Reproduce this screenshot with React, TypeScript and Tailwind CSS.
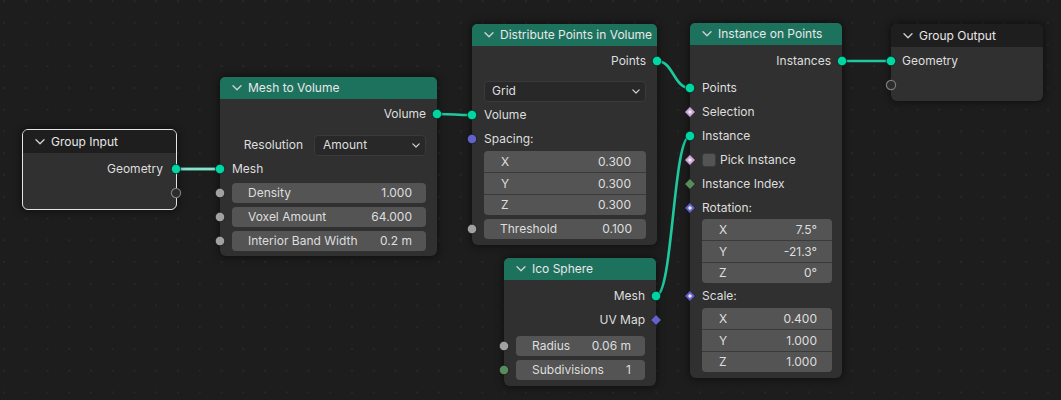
import React from 'react';

const C = { geo: '#00d6a3', gray: '#a1a1a1', vec: '#6363c7', int: '#598c5c', bool: '#cca6d6' };

type Kind = 'geo' | 'gray' | 'vec' | 'int' | 'hollow' | 'boolDot' | 'intDia' | 'vecDot' | 'vecDia';

function SocketIcon({ kind }: { kind: Kind }) {
  if (kind === 'hollow') {
    return (
      <svg width="12" height="12" viewBox="0 0 12 12">
        <circle cx="6" cy="6" r="4.6" fill="#2c2c2c" stroke="#7c7c7c" strokeWidth="1.2" />
      </svg>
    );
  }
  const circ: Record<string, string> = { geo: C.geo, gray: C.gray, vec: C.vec, int: C.int };
  if (circ[kind]) {
    return (
      <svg width="12" height="12" viewBox="0 0 12 12">
        <circle cx="6" cy="6" r="4.7" fill={circ[kind]} stroke="rgba(0,0,0,0.55)" strokeWidth="1" />
      </svg>
    );
  }
  const dia: Record<string, [string, boolean]> = {
    boolDot: [C.bool, true],
    intDia: [C.int, false],
    vecDot: [C.vec, true],
    vecDia: [C.vec, false],
  };
  const [col, dot] = dia[kind];
  return (
    <svg width="12" height="12" viewBox="0 0 12 12">
      <polygon points="6,0.6 11.4,6 6,11.4 0.6,6" fill={col} stroke="rgba(0,0,0,0.55)" strokeWidth="1" />
      {dot && <circle cx="6" cy="6" r="1.7" fill="#eeeaf2" />}
    </svg>
  );
}

function Sock({ kind, side }: { kind: Kind; side: 'l' | 'r' }) {
  return (
    <span
      className={
        side === 'l'
          ? 'absolute -left-[6px] top-1/2 -translate-y-1/2 flex'
          : 'absolute -right-[6px] top-1/2 -translate-y-1/2 flex'
      }
    >
      <SocketIcon kind={kind} />
    </span>
  );
}

function Chevron() {
  return (
    <svg width="10" height="6" viewBox="0 0 10 6" className="shrink-0">
      <path d="M1 0.8 L5 4.8 L9 0.8" fill="none" stroke="#d2d2d2" strokeWidth="1.3" strokeLinecap="round" strokeLinejoin="round" />
    </svg>
  );
}

function Header({ title, cls }: { title: string; cls: string }) {
  return (
    <div className={cls}>
      <Chevron />
      <span className="text-[#e8e8e8]">{title}</span>
    </div>
  );
}

const greenHeader = 'flex items-center gap-[6px] pl-[12px] h-[22px] rounded-t-[5px] bg-[#1d725e]';

function OutRow({ label, kind, pr = 'pr-[11px]' }: { label: string; kind: Kind; pr?: string }) {
  return (
    <div className={'relative flex items-center justify-end h-[24px] ' + pr}>
      <span>{label}</span>
      <Sock kind={kind} side="r" />
    </div>
  );
}

function InRow({ label, kind, extra = '' }: { label: string; kind?: Kind; extra?: string }) {
  return (
    <div className={'relative flex items-center h-[24px] pl-[12px] ' + extra}>
      <span>{label}</span>
      {kind && <Sock kind={kind} side="l" />}
    </div>
  );
}

function Field({ label, value, kind, extra = '' }: { label: string; value: string; kind?: Kind; extra?: string }) {
  return (
    <div className={'relative flex items-center h-[24px] pl-[12px] pr-[11px] ' + extra}>
      <div className="flex-1 h-[20px] rounded-[4px] bg-[#545454] flex items-center justify-between pl-[16px] pr-[14px]">
        <span>{label}</span>
        <span>{value}</span>
      </div>
      {kind && <Sock kind={kind} side="l" />}
    </div>
  );
}

function VecBox({ rows, extra = '' }: { rows: [string, string][]; extra?: string }) {
  const hs = ['h-[21px]', 'h-[22px] border-t border-[#3a3a3a]', 'h-[21px] border-t border-[#3a3a3a]'];
  return (
    <div className={'pl-[12px] pr-[11px] ' + extra}>
      <div className="rounded-[4px] bg-[#545454] overflow-hidden flex flex-col">
        {rows.map((r, i) => (
          <div key={i} className={'flex items-center justify-between pl-[17px] pr-[15px] ' + hs[i]}>
            <span>{r[0]}</span>
            <span>{r[1]}</span>
          </div>
        ))}
      </div>
    </div>
  );
}

function Dropdown({ text, cls }: { text: string; cls: string }) {
  return (
    <div className={cls}>
      <span>{text}</span>
      <svg width="8" height="5" viewBox="0 0 8 5">
        <path d="M0.8 0.8 L4 4 L7.2 0.8" fill="none" stroke="#cfcfcf" strokeWidth="1.2" strokeLinecap="round" strokeLinejoin="round" />
      </svg>
    </div>
  );
}

const nodeBase = 'absolute bg-[#303030] rounded-[6px] shadow-[0_0_7px_2px_rgba(0,0,0,0.4)]';

export default function App() {
  return (
    <div className="relative w-[1061px] h-[400px] overflow-hidden bg-[#1d1d1d] [font-family:Inter,sans-serif] text-[12px] leading-none text-[#dedede]">
      <svg className="absolute inset-0" width="1061" height="400">
        <defs>
          <pattern id="grid" x="3" y="0" width="21.75" height="21.75" patternUnits="userSpaceOnUse">
            <rect x="0" y="0" width="2" height="2" fill="#272727" />
          </pattern>
        </defs>
        <rect width="1061" height="400" fill="url(#grid)" />
        <g fill="none" strokeLinecap="round">
          <path d="M176 169 L220 169" stroke="#52d3b3" strokeWidth="3" />
          <path d="M176 169 L220 169" stroke="#c4efe3" strokeWidth="1" />
          <path d="M437 114 C454 114 455 115 472 115" stroke="#1ec9a0" strokeWidth="2.6" />
          <path d="M657 61 C673.5 61 673.5 88 690 88" stroke="#1ec9a0" strokeWidth="2.6" />
          <path d="M656 296 C673 296 673 136 690 136" stroke="#1ec9a0" strokeWidth="2.6" />
          <path d="M842 61 C866 61 866 61 891 61" stroke="#1ec9a0" strokeWidth="2.6" />
        </g>
      </svg>

      {/* Group Input */}
      <div className={nodeBase + ' left-[22px] top-[129px] w-[155px] h-[81px] border border-[#e4e4e4]'}>
        <Header title="Group Input" cls="flex items-center gap-[6px] pl-[12px] h-[23px] rounded-t-[5px] bg-[#1e1e1e]" />
        <div className="pt-[4px]">
          <OutRow label="Geometry" kind="geo" pr="pr-[13px]" />
          <div className="relative h-[23px]">
            <Sock kind="hollow" side="r" />
          </div>
        </div>
      </div>

      {/* Mesh to Volume */}
      <div className={nodeBase + ' left-[220px] top-[77px] w-[217px] h-[179px]'}>
        <Header title="Mesh to Volume" cls={greenHeader} />
        <div className="pt-[3px]">
          <OutRow label="Volume" kind="geo" />
          <div className="flex items-center h-[24px] mt-[7px] pl-[12px] pr-[11px]">
            <span className="w-[71px] text-right">Resolution</span>
            <Dropdown
              text="Amount"
              cls="ml-[11px] flex-1 h-[21px] rounded-[4px] bg-[#282828] border border-[#3a3a3a] flex items-center justify-between pl-[8px] pr-[5px]"
            />
          </div>
          <InRow label="Mesh" kind="geo" />
          <Field label="Density" value="1.000" kind="gray" />
          <Field label="Voxel Amount" value="64.000" kind="gray" />
          <Field label="Interior Band Width" value="0.2 m" kind="gray" />
        </div>
      </div>

      {/* Distribute Points in Volume */}
      <div className={nodeBase + ' left-[472px] top-[24px] w-[185px] h-[221px]'}>
        <Header title="Distribute Points in Volume" cls={greenHeader} />
        <div className="pt-[3px]">
          <OutRow label="Points" kind="geo" />
          <div className="flex items-center h-[24px] mt-[6px] pl-[12px] pr-[11px]">
            <Dropdown
              text="Grid"
              cls="flex-1 h-[21px] rounded-[4px] bg-[#282828] border border-[#3a3a3a] flex items-center justify-between pl-[7px] pr-[5px]"
            />
          </div>
          <InRow label="Volume" kind="geo" />
          <InRow label="Spacing:" kind="vec" />
          <VecBox rows={[['X', '0.300'], ['Y', '0.300'], ['Z', '0.300']]} />
          <Field label="Threshold" value="0.100" kind="gray" extra="mt-[2px]" />
        </div>
      </div>

      {/* Ico Sphere */}
      <div className={nodeBase + ' left-[504px] top-[258px] w-[152px] h-[128px]'}>
        <Header title="Ico Sphere" cls={greenHeader} />
        <div className="pt-[4px]">
          <OutRow label="Mesh" kind="geo" />
          <OutRow label="UV Map" kind="vecDia" />
          <Field label="Radius" value="0.06 m" kind="gray" extra="mt-[2px]" />
          <Field label="Subdivisions" value="1" kind="int" />
        </div>
      </div>

      {/* Instance on Points */}
      <div className={nodeBase + ' left-[690px] top-[23px] w-[152px] h-[355px]'}>
        <Header title="Instance on Points" cls={greenHeader} />
        <div className="pt-[4px]">
          <OutRow label="Instances" kind="geo" />
          <InRow label="Points" kind="geo" extra="mt-[3px]" />
          <InRow label="Selection" kind="boolDot" />
          <InRow label="Instance" kind="geo" />
          <div className="relative flex items-center h-[24px] pl-[12px]">
            <span className="w-[14px] h-[14px] rounded-[3px] bg-[#545454] border border-[#3c3c3c] mr-[4px]" />
            <span>Pick Instance</span>
            <Sock kind="boolDot" side="l" />
          </div>
          <InRow label="Instance Index" kind="intDia" />
          <div className="relative flex items-center h-[23px] pl-[12px]">
            <span>Rotation:</span>
            <Sock kind="vecDot" side="l" />
          </div>
          <VecBox rows={[['X', '7.5°'], ['Y', '-21.3°'], ['Z', '0°']]} extra="!pr-[10px]" />
          <InRow label="Scale:" kind="vecDot" extra="mt-[1px]" />
          <VecBox rows={[['X', '0.400'], ['Y', '1.000'], ['Z', '1.000']]} extra="!pr-[10px]" />
        </div>
      </div>

      {/* Group Output */}
      <div className={nodeBase + ' left-[891px] top-[24px] w-[152px] h-[77px]'}>
        <Header title="Group Output" cls="flex items-center gap-[6px] pl-[12px] h-[23px] rounded-t-[5px] bg-[#1e1e1e]" />
        <div className="pt-[2px]">
          <InRow label="Geometry" kind="geo" extra="!pl-[11px]" />
          <div className="relative h-[24px]">
            <Sock kind="hollow" side="l" />
          </div>
        </div>
      </div>
    </div>
  );
}
